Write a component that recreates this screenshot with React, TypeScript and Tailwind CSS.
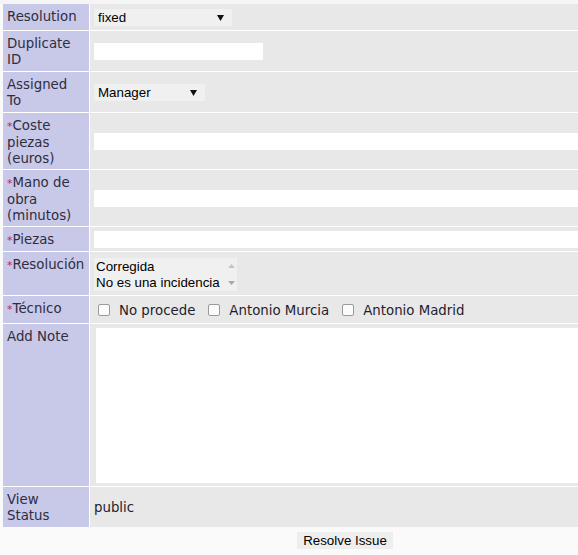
import React from "react";

const labelFont = { fontFamily: '"DejaVu Sans", Verdana, sans-serif' };
const arial = { fontFamily: '"Liberation Sans", Arial, sans-serif' };

function Req() {
  return <span className="text-[#cc2244] text-[11px]">*</span>;
}

function Label({ children }: { children: React.ReactNode }) {
  return (
    <div
      className="w-[87px] shrink-0 bg-[#c8c8e8] pl-[4px] pr-[10px] pt-[5px] text-[13.33px] leading-[16px] text-[#2e2e40] border-r border-white"
      style={labelFont}
    >
      {children}
    </div>
  );
}

function Row({
  label,
  h,
  children,
}: {
  label: React.ReactNode;
  h: string;
  children?: React.ReactNode;
}) {
  return (
    <div className={`flex border-b border-white ${h}`}>
      <Label>{label}</Label>
      <div className="flex-1 bg-[#e8e8e8] flex items-center pl-[4px] pt-[1px]">{children}</div>
    </div>
  );
}

function Select({ value, w }: { value: string; w: string }) {
  return (
    <div
      className={`${w} h-[17px] bg-[#f0f0f0] flex items-center justify-between pl-[4px] pr-[8px] text-[13.33px] text-black`}
      style={arial}
    >
      <span>{value}</span>
      <svg width="7" height="6" viewBox="0 0 7 6">
        <polygon points="0,0 7,0 3.5,6" fill="#111" />
      </svg>
    </div>
  );
}

function Check({ label, first }: { label: string; first?: boolean }) {
  return (
    <div className={`flex items-center ${first ? "ml-[4px]" : "ml-[13px]"}`}>
      <div className="w-[12px] h-[12px] rounded-[2px] border border-[#9a9a9a] bg-[#fbfbfb] mr-[9px]" />
      <span className="text-[13.33px] leading-[16px] text-[#1e1e2e] relative top-[1px]" style={labelFont}>
        {label}
      </span>
    </div>
  );
}

export default function App() {
  return (
    <div className="w-[578px] h-[555px] overflow-hidden bg-[#fafafa]">
      <div className="h-[4px] bg-[#f5f5f5]" />
      <div className="w-[684px] ml-[3px]">
        <Row label="Resolution" h="h-[27px]">
          <Select value="fixed" w="w-[138px]" />
        </Row>
        <Row label="Duplicate ID" h="h-[41px]">
          <div className="w-[169px] h-[17px] bg-white" />
        </Row>
        <Row label="Assigned To" h="h-[41px]">
          <Select value="Manager" w="w-[111px]" />
        </Row>
        <Row
          label={
            <>
              <Req />
              Coste piezas (euros)
            </>
          }
          h="h-[57px]"
        >
          <div className="w-[560px] h-[17px] bg-white" />
        </Row>
        <Row
          label={
            <>
              <Req />
              Mano de obra (minutos)
            </>
          }
          h="h-[57px]"
        >
          <div className="w-[560px] h-[17px] bg-white" />
        </Row>
        <Row
          label={
            <>
              <Req />
              Piezas
            </>
          }
          h="h-[25px]"
        >
          <div className="w-[560px] h-[17px] bg-white" />
        </Row>
        <Row
          label={
            <>
              <Req />
              Resolución
            </>
          }
          h="h-[44px]"
        >
          <div
            className="w-[143px] h-[33px] bg-[#f0f0f0] flex text-[13.33px] leading-[16px] text-black"
            style={arial}
          >
            <div className="flex-1 pl-[2px] pt-[1px] whitespace-nowrap">
              <div>Corregida</div>
              <div>No es una incidencia</div>
            </div>
            <div className="w-[12px] flex flex-col justify-between items-center py-[6px]">
              <svg width="7" height="4" viewBox="0 0 7 4">
                <polygon points="0,4 7,4 3.5,0" fill="#c4c4c4" />
              </svg>
              <svg width="7" height="4" viewBox="0 0 7 4">
                <polygon points="0,0 7,0 3.5,4" fill="#a8a8a8" />
              </svg>
            </div>
          </div>
        </Row>
        <Row
          label={
            <>
              <Req />
              Técnico
            </>
          }
          h="h-[28px]"
        >
          <Check label="No procede" first />
          <Check label="Antonio Murcia" />
          <Check label="Antonio Madrid" />
        </Row>
        <Row label="Add Note" h="h-[163px]">
          <div className="ml-[2px] w-[570px] h-[155px] bg-white" />
        </Row>
        <div className="flex h-[40px]">
          <Label>View Status</Label>
          <div className="flex-1 bg-[#e8e8e8] flex items-center pl-[4px] pt-[1px]">
            <span className="text-[13.33px] text-[#1e1e2e]" style={labelFont}>
              public
            </span>
          </div>
        </div>
        <div className="flex justify-center pt-[5px]">
          <div
            className="w-[96px] h-[17px] bg-[#eeeeee] flex items-center justify-center text-[13.33px] text-black"
            style={arial}
          >
            Resolve Issue
          </div>
        </div>
      </div>
    </div>
  );
}
